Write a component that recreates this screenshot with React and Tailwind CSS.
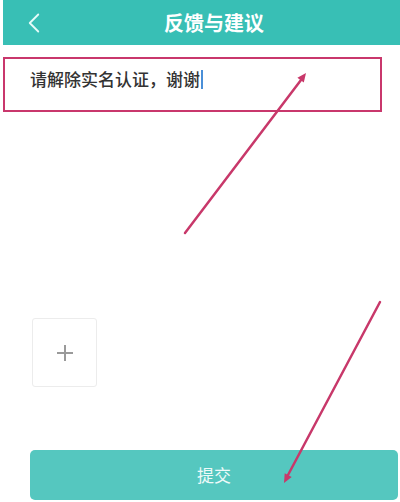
import { ChevronLeft } from "lucide-react";

const Arrows = () => (
  <svg className="absolute inset-0 pointer-events-none" width="400" height="502" viewBox="0 0 400 502">
    <line x1="185" y1="233" x2="301" y2="80" stroke="#c8386a" strokeWidth="2.5" strokeLinecap="round" />
    <polygon points="306,73 303.8,82.6 297.4,77.8" fill="#c8386a" />
    <line x1="380" y1="302" x2="288" y2="475" stroke="#c8386a" strokeWidth="2.5" strokeLinecap="round" />
    <polygon points="284,483 291.7,476.9 284.7,473.2" fill="#c8386a" />
  </svg>
);

const App = () => {
  return (
    <div
      className="relative w-[400px] h-[502px] bg-white overflow-hidden"
      style={{ fontFamily: '"Noto Sans CJK SC", "Noto Sans", sans-serif' }}
    >
      <div className="ml-[3px] h-[45px] bg-[#38bfb5] flex items-center pl-[14px] text-white">
        <ChevronLeft size={34} strokeWidth={1.3} className="text-[#e6fbf9]" />
        <h1 className="flex-1 text-center pr-[23px] text-[20px] font-bold leading-none">反馈与建议</h1>
      </div>

      <div className="mt-[12px] ml-[3px] w-[379px] h-[55px] border-2 border-[#c9376c] pl-[25px] pt-[8px]">
        <p className="flex items-center text-[17px] leading-[24px] text-[#333] font-medium">
          请解除实名认证，谢谢
          <span className="inline-block w-[2px] h-[19px] bg-[#4a8fd8] ml-[1px]" />
        </p>
      </div>

      <div className="mt-[206px] ml-[32px] w-[65px] h-[69px] border border-[#ececec] rounded-[3px] flex items-center justify-center">
        <svg width="20" height="20" viewBox="0 0 20 20">
          <path d="M10 2v16M2 10h16" stroke="#9a9a9a" strokeWidth="2" />
        </svg>
      </div>

      <button className="mt-[63px] ml-[30px] w-[368px] h-[50px] rounded-[5px] bg-[#55c7bf] text-[#eefaf9] text-[17px] flex items-center justify-center">
        提交
      </button>

      <Arrows />
    </div>
  );
};

export default App;
